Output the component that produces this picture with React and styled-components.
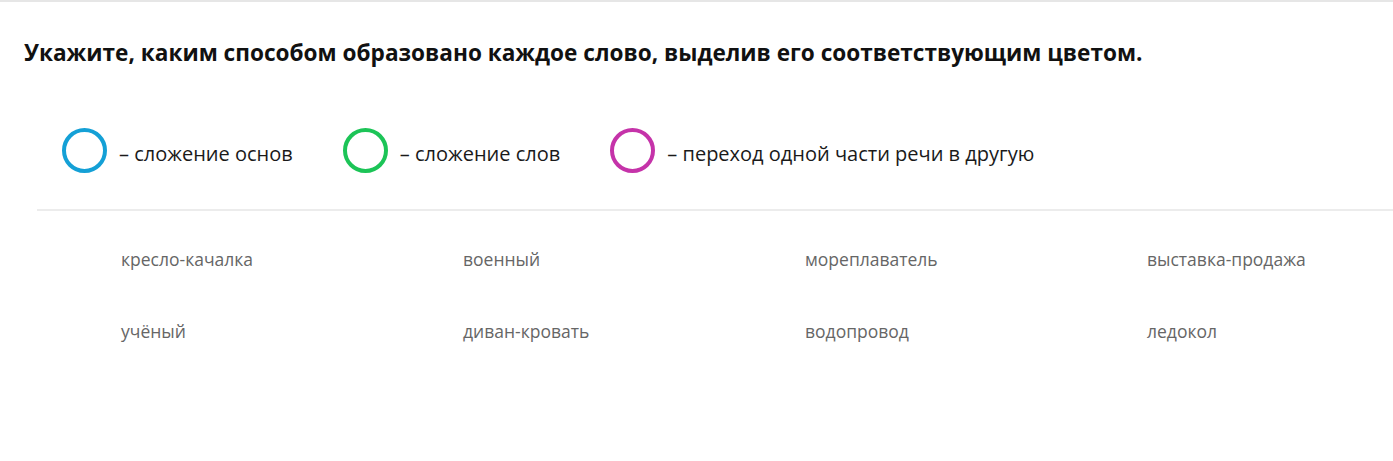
import styled, { createGlobalStyle } from 'styled-components'

const GlobalStyle = createGlobalStyle`
  html, body {
    margin: 0;
    padding: 0;
    background: #fff;
  }
  body {
    font-family: "Open Sans", "Liberation Sans", sans-serif;
  }
`

const Page = styled.div`
  border-top: 2px solid #e6e6e6;
  min-height: 459px;
  overflow: hidden;
`

const Title = styled.h2`
  margin: 0;
  padding: 36px 0 0 24px;
  font-size: 22.6px;
  font-weight: 700;
  line-height: 30px;
  color: #111;
`

const Legend = styled.div`
  display: flex;
  align-items: center;
  padding: 60px 0 0 62px;
  height: 44px;
`

const LegendItem = styled.div`
  display: flex;
  align-items: center;
  margin-right: 50px;
`

const Ring = styled.span`
  display: inline-block;
  box-sizing: border-box;
  width: 45px;
  height: 45px;
  border-radius: 50%;
  border: 4.5px solid ${props => props.color};
  margin-right: 12px;
`

const LegendText = styled.span`
  font-size: 20px;
  color: #1a1a1a;
  line-height: 28px;
  margin-top: 8px;
`

const Divider = styled.div`
  margin: 37px 0 0 37px;
  height: 2px;
  background: #ececec;
`

const Words = styled.div`
  display: grid;
  grid-template-columns: repeat(3, 342px) 1fr;
  row-gap: 46px;
  padding: 35px 0 0 121px;
`

const Word = styled.div`
  font-size: 17.5px;
  line-height: 26px;
  color: #666;
`

const legend = [
  { color: '#14a0d6', text: '– сложение основ' },
  { color: '#1cc457', text: '– сложение слов' },
  { color: '#c533a9', text: '– переход одной части речи в другую' },
]

const words = [
  'кресло-качалка', 'военный', 'мореплаватель', 'выставка-продажа',
  'учёный', 'диван-кровать', 'водопровод', 'ледокол',
]

export default function App() {
  return (
    <Page>
      <GlobalStyle />
      <Title>Укажите, каким способом образовано каждое слово, выделив его соответствующим цветом.</Title>
      <Legend>
        {legend.map(l => (
          <LegendItem key={l.text}>
            <Ring color={l.color} />
            <LegendText>{l.text}</LegendText>
          </LegendItem>
        ))}
      </Legend>
      <Divider />
      <Words>
        {words.map(w => <Word key={w}>{w}</Word>)}
      </Words>
    </Page>
  )
}
